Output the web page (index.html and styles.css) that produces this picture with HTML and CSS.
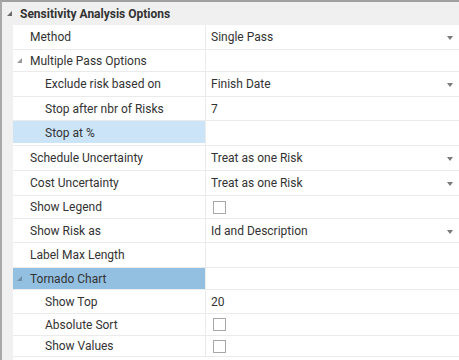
FILE: index.html
```html
<!DOCTYPE html>
<html>
<head>
<meta charset="utf-8">
<link rel="stylesheet" href="styles.css">
</head>
<body>
<div class="grid">
  <div class="header">
    <svg class="arrow arrow--dark" width="5" height="5" viewBox="0 0 5 5"><polygon points="5,0 5,5 0,5"/></svg>
    <span class="header-text">Sensitivity Analysis Options</span>
  </div>
  <div class="rows">
    <div class="row r25">
      <div class="label l1">Method</div>
      <div class="value">Single Pass<span class="dd"></span></div>
    </div>
    <div class="row r22">
      <div class="label cat"><svg class="arrow" width="5" height="5" viewBox="0 0 5 5"><polygon points="5,0 5,5 0,5"/></svg><span>Multiple Pass Options</span></div>
      <div class="value"></div>
    </div>
    <div class="row r25">
      <div class="label l2">Exclude risk based on</div>
      <div class="value">Finish Date<span class="dd"></span></div>
    </div>
    <div class="row r24">
      <div class="label l2">Stop after nbr of Risks</div>
      <div class="value">7</div>
    </div>
    <div class="row r25">
      <div class="label l2 selected">Stop at %</div>
      <div class="value"></div>
    </div>
    <div class="row r25">
      <div class="label l1">Schedule Uncertainty</div>
      <div class="value">Treat as one Risk<span class="dd"></span></div>
    </div>
    <div class="row r25">
      <div class="label l1">Cost Uncertainty</div>
      <div class="value">Treat as one Risk<span class="dd"></span></div>
    </div>
    <div class="row r23">
      <div class="label l1">Show Legend</div>
      <div class="value"><span class="check"></span></div>
    </div>
    <div class="row r24">
      <div class="label l1">Show Risk as</div>
      <div class="value">Id and Description<span class="dd"></span></div>
    </div>
    <div class="row r25">
      <div class="label l1">Label Max Length</div>
      <div class="value"></div>
    </div>
    <div class="row r22">
      <div class="label cat active"><svg class="arrow" width="5" height="5" viewBox="0 0 5 5"><polygon points="5,0 5,5 0,5"/></svg><span>Tornado Chart</span></div>
      <div class="value"></div>
    </div>
    <div class="row r24">
      <div class="label l2">Show Top</div>
      <div class="value">20</div>
    </div>
    <div class="row r22">
      <div class="label l2">Absolute Sort</div>
      <div class="value"><span class="check"></span></div>
    </div>
    <div class="row r21">
      <div class="label l2">Show Values</div>
      <div class="value"><span class="check"></span></div>
    </div>
  </div>
</div>
</body>
</html>
```

FILE: styles.css
```css
html, body {
  margin: 0;
  padding: 0;
  background: #ffffff;
}
body {
  width: 459px;
  height: 360px;
  overflow: hidden;
  font-family: Roboto, "Liberation Sans", sans-serif;
  font-size: 12px;
  color: #333333;
}
.grid {
  border-top: 2px solid #a0a0a0;
  border-left: 2px solid #a9a9a9;
  background: #f0f0f0;
  height: 358px;
}
.header {
  height: 23px;
  display: flex;
  align-items: center;
  padding-left: 5px;
}
.header-text {
  font-weight: bold;
  margin-left: 8px;
  color: #333333;
}
.arrow {
  display: block;
  fill: #9a9a9a;
}
.arrow--dark {
  fill: #6a6a6a;
}
.rows {
  margin-left: 11px;
  background: #ffffff;
  height: 335px;
}
.row {
  display: grid;
  grid-template-columns: 193px 1fr;
  border-bottom: 1px solid #ebebeb;
  box-sizing: border-box;
  background: #ffffff;
}
.r21 { height: 21px; }
.r22 { height: 22px; }
.r23 { height: 23px; }
.r24 { height: 24px; }
.r25 { height: 25px; }
.label {
  display: flex;
  align-items: center;
  border-right: 1px solid #ebebeb;
  white-space: nowrap;
}
.l1 { padding-left: 17px; }
.l2 { padding-left: 32px; }
.cat { padding-left: 4px; }
.cat span { margin-left: 8px; }
.selected {
  background: linear-gradient(#cce4f7, #cce4f7) top left / 100% 22px no-repeat;
}
.active {
  background: #93bfe1;
}
.active .arrow {
  fill: #6f8ea8;
}
.value {
  display: flex;
  align-items: center;
  padding-left: 5px;
  position: relative;
}
.dd {
  position: absolute;
  right: 6px;
  top: 50%;
  margin-top: -1px;
  width: 0;
  height: 0;
  border-left: 3px solid transparent;
  border-right: 3px solid transparent;
  border-top: 4px solid #7a7a7a;
}
.check {
  display: block;
  width: 11px;
  height: 11px;
  border: 1px solid #a8a8a8;
  margin-left: 2px;
  background: #ffffff;
}
```
